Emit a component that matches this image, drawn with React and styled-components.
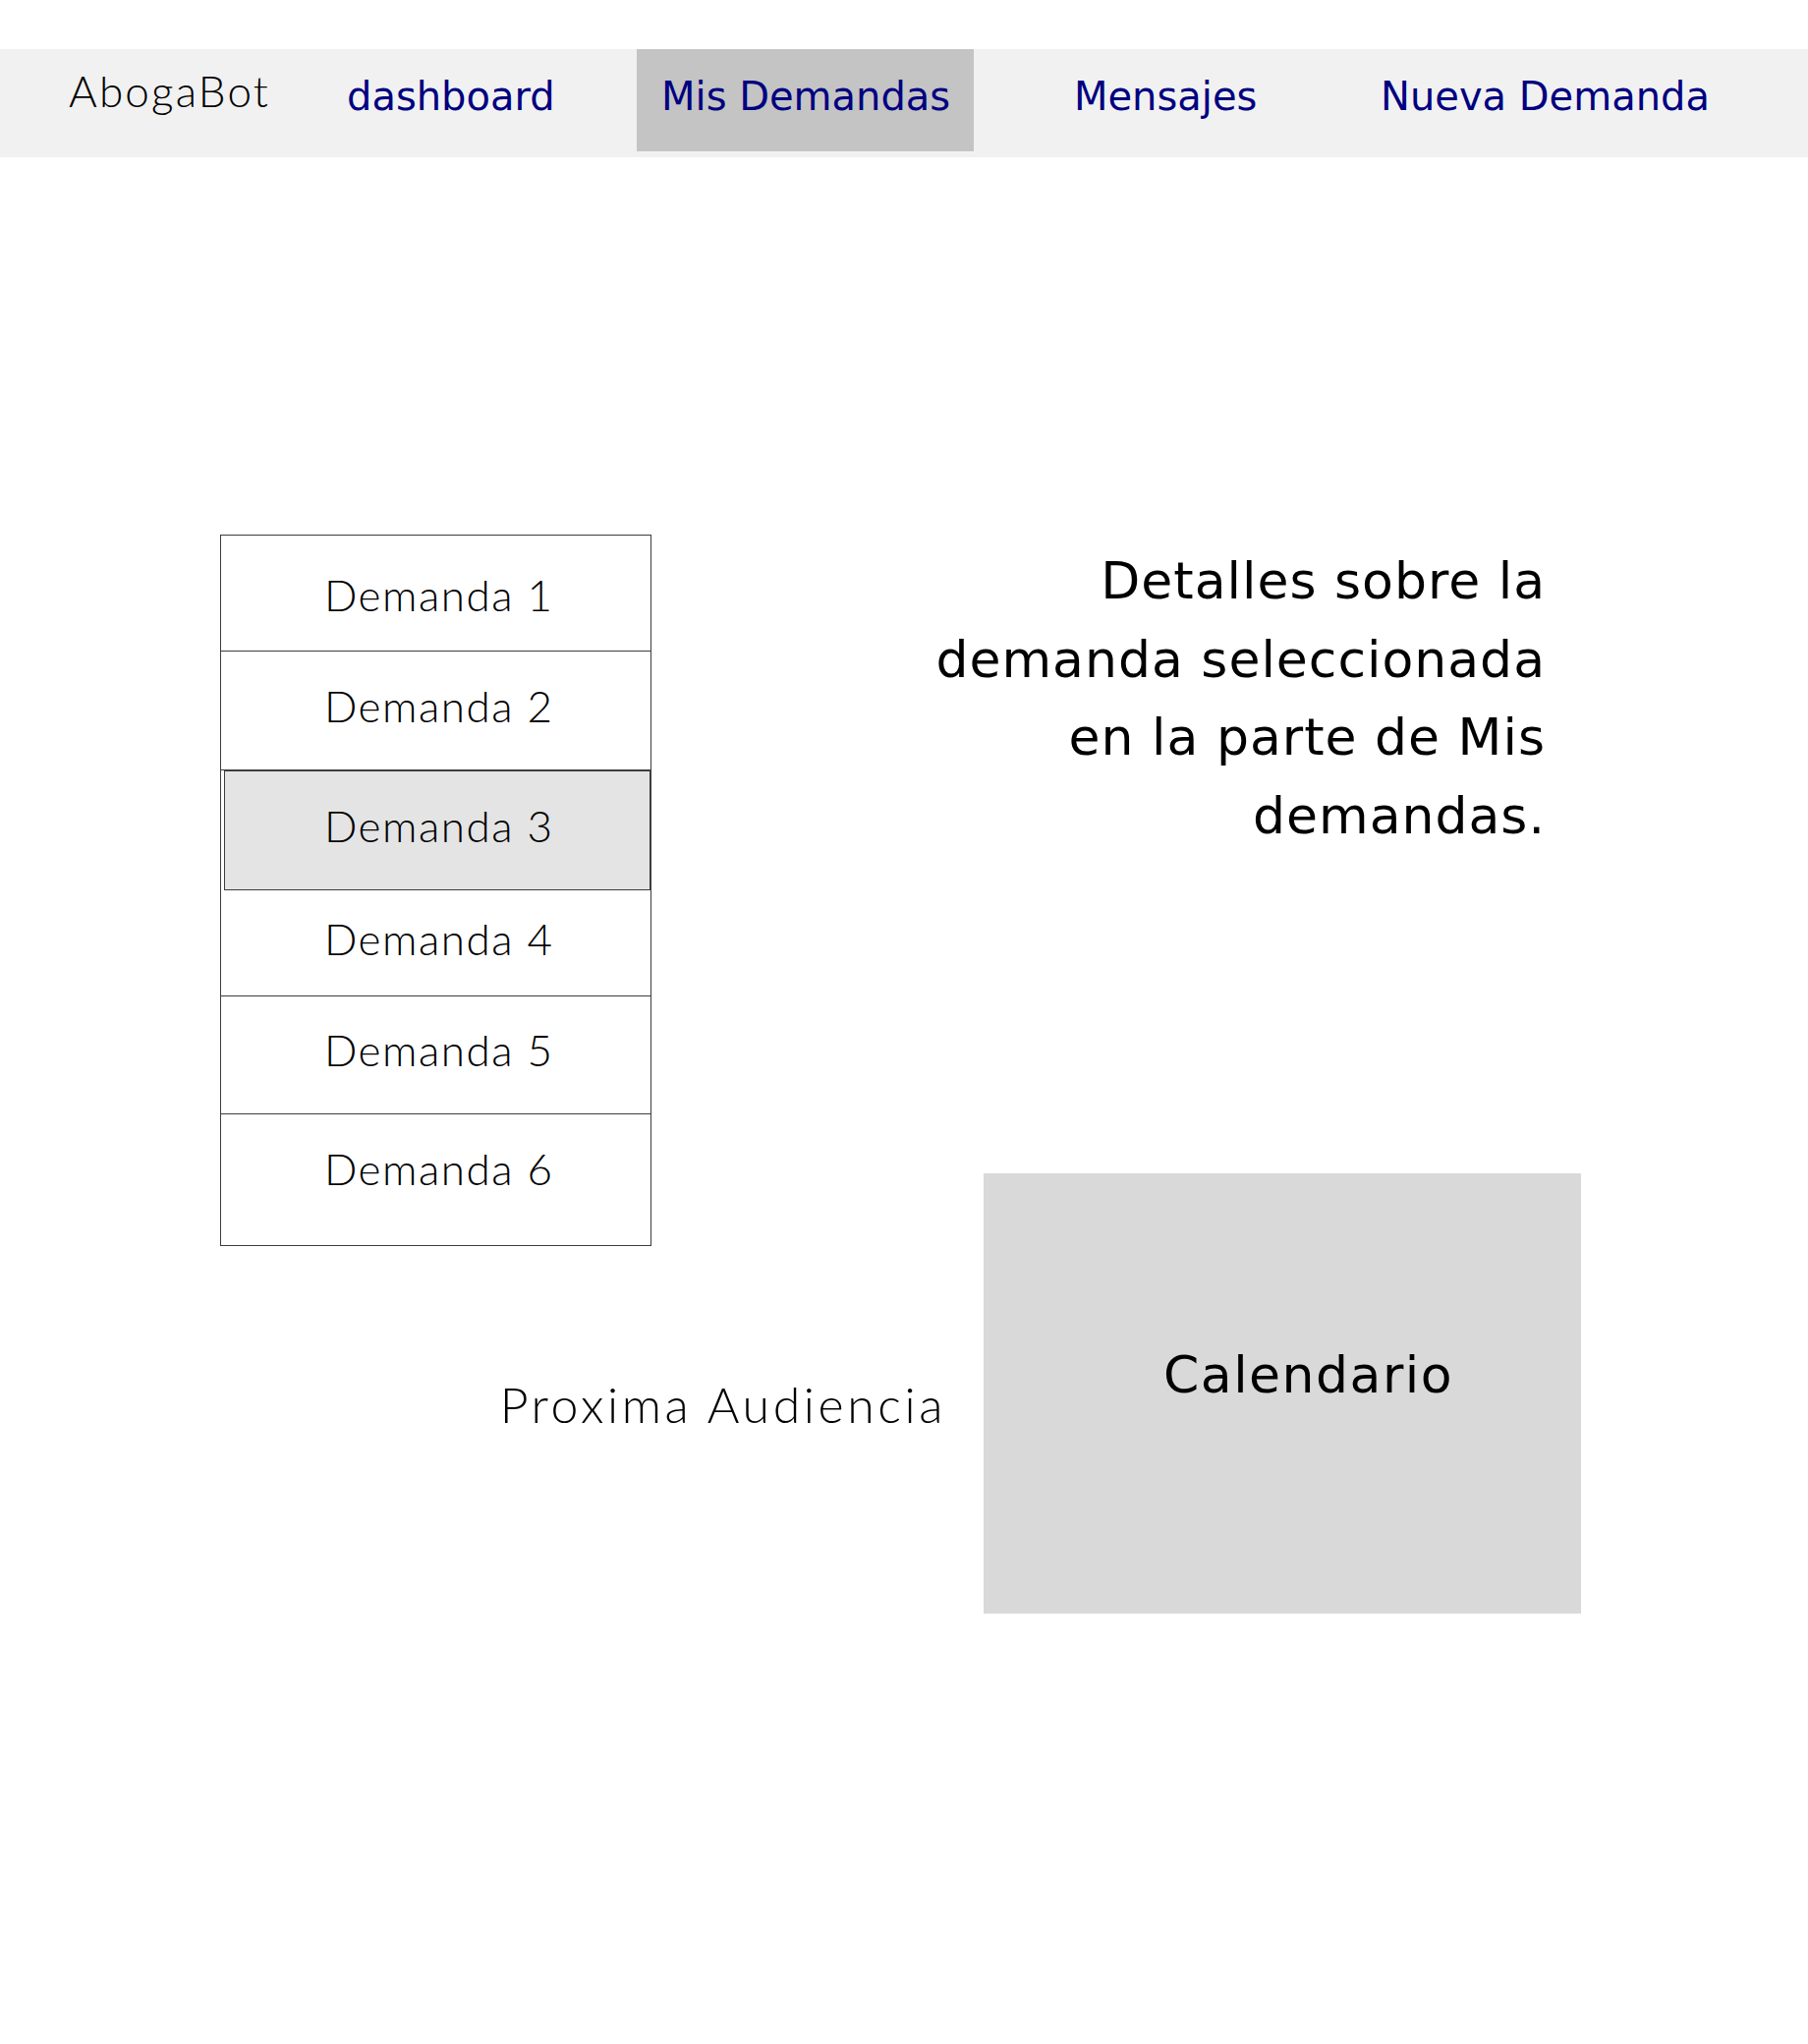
import React from "react";
import styled, { createGlobalStyle } from "styled-components";

const GlobalStyle = createGlobalStyle`
  html, body {
    margin: 0;
    padding: 0;
    background: #ffffff;
    font-family: "Lato", "Liberation Sans", sans-serif;
    color: #000000;
  }
`;

const NavBar = styled.nav`
  margin-top: 50px;
  height: 110px;
  background: #f1f1f1;
  display: flex;
  align-items: flex-start;
  padding-left: 70px;
`;

const Brand = styled.div`
  box-sizing: border-box;
  width: 283px;
  padding-top: 16px;
  font-family: "Lato", sans-serif;
  font-weight: 300;
  font-size: 44px;
  letter-spacing: 2.2px;
  line-height: 1.2;
  color: #000;
  white-space: nowrap;
`;

const NavLink = styled.a`
  box-sizing: border-box;
  display: block;
  width: ${(p) => (p.$w ? `${p.$w}px` : "auto")};
  height: ${(p) => (p.$active ? "104px" : "110px")};
  padding-left: ${(p) => p.$pl || 0}px;
  padding-top: 25px;
  background: ${(p) => (p.$active ? "#c4c4c4" : "transparent")};
  font-family: "DejaVu Sans", sans-serif;
  font-size: 40px;
  line-height: 1.164;
  color: #000080;
  text-decoration: none;
  white-space: nowrap;
`;

const Main = styled.main`
  display: grid;
  padding: 384px 0 0 224px;
  grid-template-columns: 438px 275px 64px 567px 41px;
  grid-template-rows: 650px 73px 375px;
  grid-template-areas:
    "list . details details ."
    "list . . cal cal"
    "prox prox prox cal cal";
`;

const List = styled.ul`
  grid-area: list;
  align-self: start;
  box-sizing: border-box;
  width: 439px;
  margin: 0;
  padding: 0;
  list-style: none;
  border: 1px solid #3d3d3d;
`;

const Row = styled.li`
  box-sizing: border-box;
  height: ${(p) => p.$h}px;
  padding-top: ${(p) => p.$pt}px;
  padding-left: ${(p) => (p.$selected ? 101 : 105)}px;
  margin-left: ${(p) => (p.$selected ? 3 : 0)}px;
  background: ${(p) => (p.$selected ? "#e4e4e4" : "#ffffff")};
  border: ${(p) => (p.$selected ? "1px solid #3d3d3d" : "none")};
  border-bottom: ${(p) => (p.$last ? "none" : "1px solid #3d3d3d")};
  font-family: "Lato", sans-serif;
  font-weight: 300;
  font-size: 44px;
  letter-spacing: 1.5px;
  line-height: 1.2;
  color: #000;
  white-space: nowrap;
`;

const Details = styled.p`
  grid-area: details;
  margin: 8px -5px 0 0;
  text-align: right;
  font-family: "DejaVu Sans", sans-serif;
  font-size: 52px;
  letter-spacing: 1px;
  line-height: 79.5px;
  color: #000;
  white-space: nowrap;
`;

const NextHearing = styled.div`
  grid-area: prox;
  justify-self: end;
  align-self: start;
  margin: 132px 38px 0 0;
  font-family: "Lato", sans-serif;
  font-weight: 300;
  font-size: 50px;
  letter-spacing: 3.6px;
  line-height: 1.2;
  color: #000;
  white-space: nowrap;
`;

const Calendar = styled.section`
  grid-area: cal;
  box-sizing: border-box;
  background: #d9d9d9;
  padding: 175px 0 0 183px;
  font-family: "DejaVu Sans", sans-serif;
  font-size: 52px;
  letter-spacing: 1.5px;
  line-height: 1.164;
  color: #000;
  white-space: nowrap;
`;

const rows = [
  { label: "Demanda 1", h: 118, pt: 34 },
  { label: "Demanda 2", h: 121, pt: 29 },
  { label: "Demanda 3", h: 122, pt: 29, selected: true },
  { label: "Demanda 4", h: 108, pt: 23 },
  { label: "Demanda 5", h: 120, pt: 28 },
  { label: "Demanda 6", h: 133, pt: 29, last: true },
];

export default function App() {
  return (
    <>
      <GlobalStyle />
      <NavBar>
        <Brand>AbogaBot</Brand>
        <NavLink href="#" $w={295}>dashboard</NavLink>
        <NavLink href="#" $w={343} $pl={25} $active>
          Mis Demandas
        </NavLink>
        <NavLink href="#" $w={414} $pl={102}>Mensajes</NavLink>
        <NavLink href="#">Nueva Demanda</NavLink>
      </NavBar>
      <Main>
        <List>
          {rows.map((r) => (
            <Row
              key={r.label}
              $h={r.h}
              $pt={r.pt}
              $selected={r.selected}
              $last={r.last}
            >
              {r.label}
            </Row>
          ))}
        </List>
        <Details>
          Detalles sobre la
          <br />
          demanda seleccionada
          <br />
          en la parte de Mis
          <br />
          demandas.
        </Details>
        <NextHearing>Proxima Audiencia</NextHearing>
        <Calendar>Calendario</Calendar>
      </Main>
    </>
  );
}
